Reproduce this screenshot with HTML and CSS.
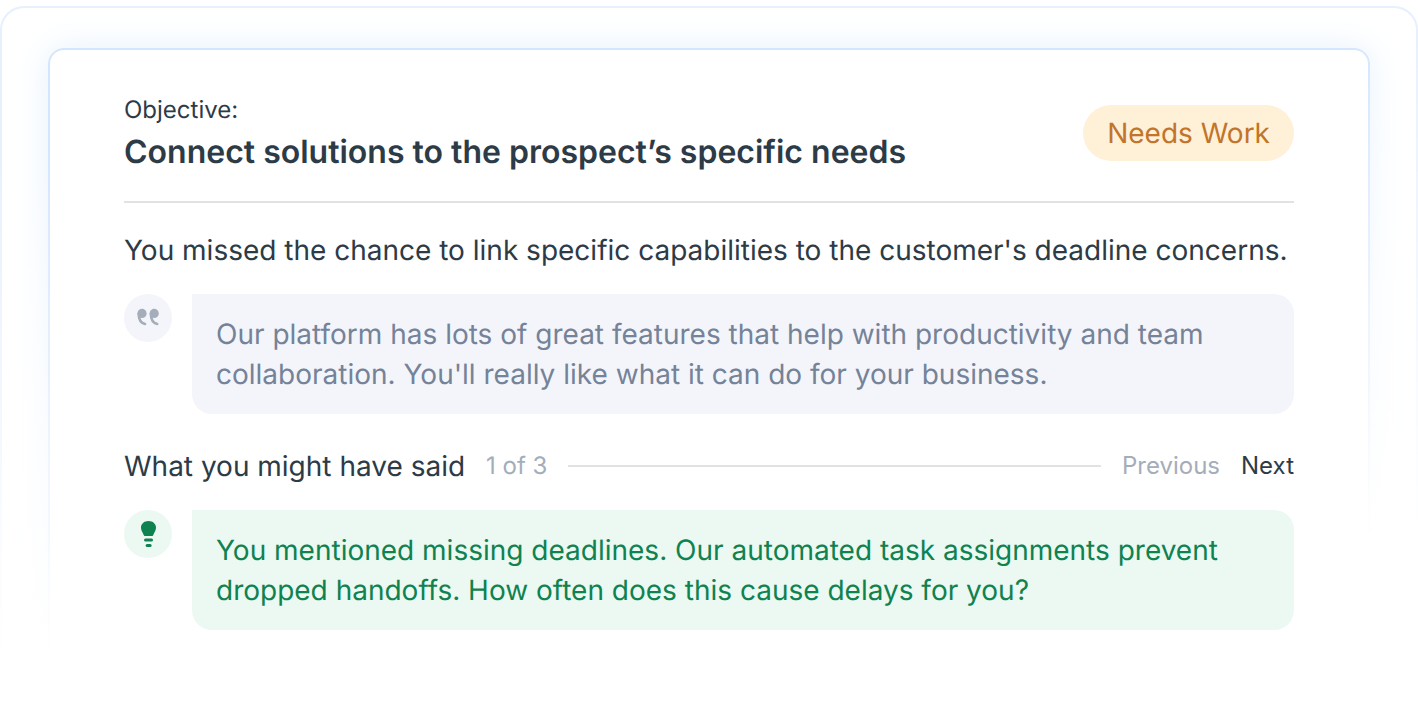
FILE: index.html
```
<!DOCTYPE html>
<html lang="en">
<head>
   <meta charset="UTF-8">
   <meta name="viewport" content="width=device-width, initial-scale=1.0">
   <title>Objective feedback</title>
   <link rel="stylesheet" href="styles.css">
</head>
<body>
   <div class="frame">
      <main class="card">
         <div class="card-content">
            <header class="card-header">
               <div>
                  <p class="label">Objective:</p>
                  <h1>Connect solutions to the prospect’s specific needs</h1>
               </div>
               <span class="badge">Needs Work</span>
            </header>
            <p class="feedback">You missed the chance to link specific capabilities to the customer's deadline concerns.</p>
            <div class="message quote">
               <div class="icon">
                  <svg width="48" height="48" viewBox="0 0 48 48" fill="none" stroke="currentColor" stroke-width="2.6" stroke-linecap="round" aria-hidden="true">
                     <circle cx="18" cy="19.4" r="4.6" fill="currentColor" stroke="none"/>
                     <path d="M14.7 20C14.7 26 17 29 21 29.9"/>
                     <circle cx="30.2" cy="19.4" r="4.6" fill="currentColor" stroke="none"/>
                     <path d="M26.9 20C26.9 26 29.2 29 33.2 29.9"/>
                  </svg>
               </div>
               <blockquote class="bubble">Our platform has lots of great features that help with productivity and team collaboration. You'll really like what it can do for your business.</blockquote>
            </div>
            <div class="suggestion-bar">
               <h2>What you might have said</h2>
               <span class="count">1 of 3</span>
               <hr>
               <button type="button" disabled>Previous</button>
               <button type="button">Next</button>
            </div>
            <div class="message suggestion">
               <div class="icon">
                  <svg width="48" height="48" viewBox="0 0 48 48" fill="currentColor" aria-hidden="true">
                     <path d="M24.5 11C29 11 32 13.8 32 17.8C32 20.8 30.2 22.4 29.2 25.2C29 25.8 28.8 26 28.3 26H20.7C20.2 26 20 25.8 19.8 25.2C18.8 22.4 17 20.8 17 17.8C17 13.8 20 11 24.5 11Z"/>
                     <rect x="20" y="28.4" width="9" height="3" rx="1.5"/>
                     <rect x="21.6" y="34" width="6" height="3" rx="1.5"/>
                  </svg>
               </div>
               <p class="bubble">You mentioned missing deadlines. Our automated task assignments prevent dropped handoffs. How often does this cause delays for you?</p>
            </div>
         </div>
      </main>
   </div>
</body>
</html>
```
FILE: styles.css
```
* {
   box-sizing: border-box;
}

body {
   margin: 0;
   padding-top: 6px;
   min-height: 100vh;
   display: flex;
   flex-direction: column;
   font-family: Inter, 'Liberation Sans', sans-serif;
   font-size: 28px;
   line-height: 40px;
   text-rendering: geometricPrecision;
   background-color: #fff;
   color: #2d3b47;
}

h1, h2, p, blockquote {
   margin: 0;
}

.frame {
   position: relative;
   flex: 1;
   display: flex;
   padding: 40px 46px 0;
   border: 2px solid #e6f0fe;
   border-bottom: 0;
   border-radius: 24px 24px 0 0;
}

/* fades the frame and card edges out towards the bottom */
.frame::after {
   content: '';
   position: absolute;
   inset: -2px;
   background: linear-gradient(355deg, #fff 22%, rgba(255, 255, 255, 0) 84%);
}

.card {
   flex: 1;
   min-width: 0;
   padding: 44px 74px 40px;
   border: 2px solid #d3e6fe;
   border-bottom: 0;
   border-radius: 16px 16px 0 0;
   box-shadow: 0 0 36px #e6f1fc;
}

.card-content {
   position: relative;
   z-index: 1;
}

.card-header {
   display: flex;
   align-items: center;
   justify-content: space-between;
   gap: 24px;
   padding-bottom: 29px;
   border-bottom: 2px solid #e1e2e4;
}

.label {
   font-size: 24px;
   line-height: 32px;
   margin-bottom: 6px;
}

h1 {
   font-size: 32px;
   line-height: 40px;
   font-weight: 600;
}

.badge {
   flex: none;
   padding: 8px 24px;
   border-radius: 28px;
   background-color: #fff0d8;
   color: #c27429;
}

.feedback {
   margin: 27px 0 24px;
}

.message {
   display: flex;
   gap: 20px;
}

.icon {
   flex: none;
   width: 48px;
   height: 48px;
   border-radius: 50%;
}

.icon svg {
   display: block;
}

.bubble {
   flex: 1;
   padding: 20px 24px;
   border-radius: 0 20px 20px 20px;
}

.quote .icon, .quote .bubble {
   background-color: #f4f5fb;
}

.quote .icon {
   color: #a4adb9;
}

.quote .bubble {
   color: #758398;
}

.suggestion .icon, .suggestion .bubble {
   background-color: #ebf9f2;
   color: #0f8250;
}

.suggestion-bar {
   display: flex;
   align-items: center;
   gap: 21px;
   margin: 32px 0 24px;
}

h2 {
   font-size: 28px;
   font-weight: 400;
}

.count, button {
   font-size: 24px;
}

.count, button:disabled {
   color: #a4adb9;
}

hr {
   flex: 1;
   margin: 0;
   border: 0;
   border-top: 2px solid #e1e2e4;
}

button {
   padding: 0;
   border: 0;
   background: none;
   font-family: inherit;
   line-height: 40px;
   color: #2d3b47;
   cursor: pointer;
}

button:disabled {
   cursor: default;
}
```
